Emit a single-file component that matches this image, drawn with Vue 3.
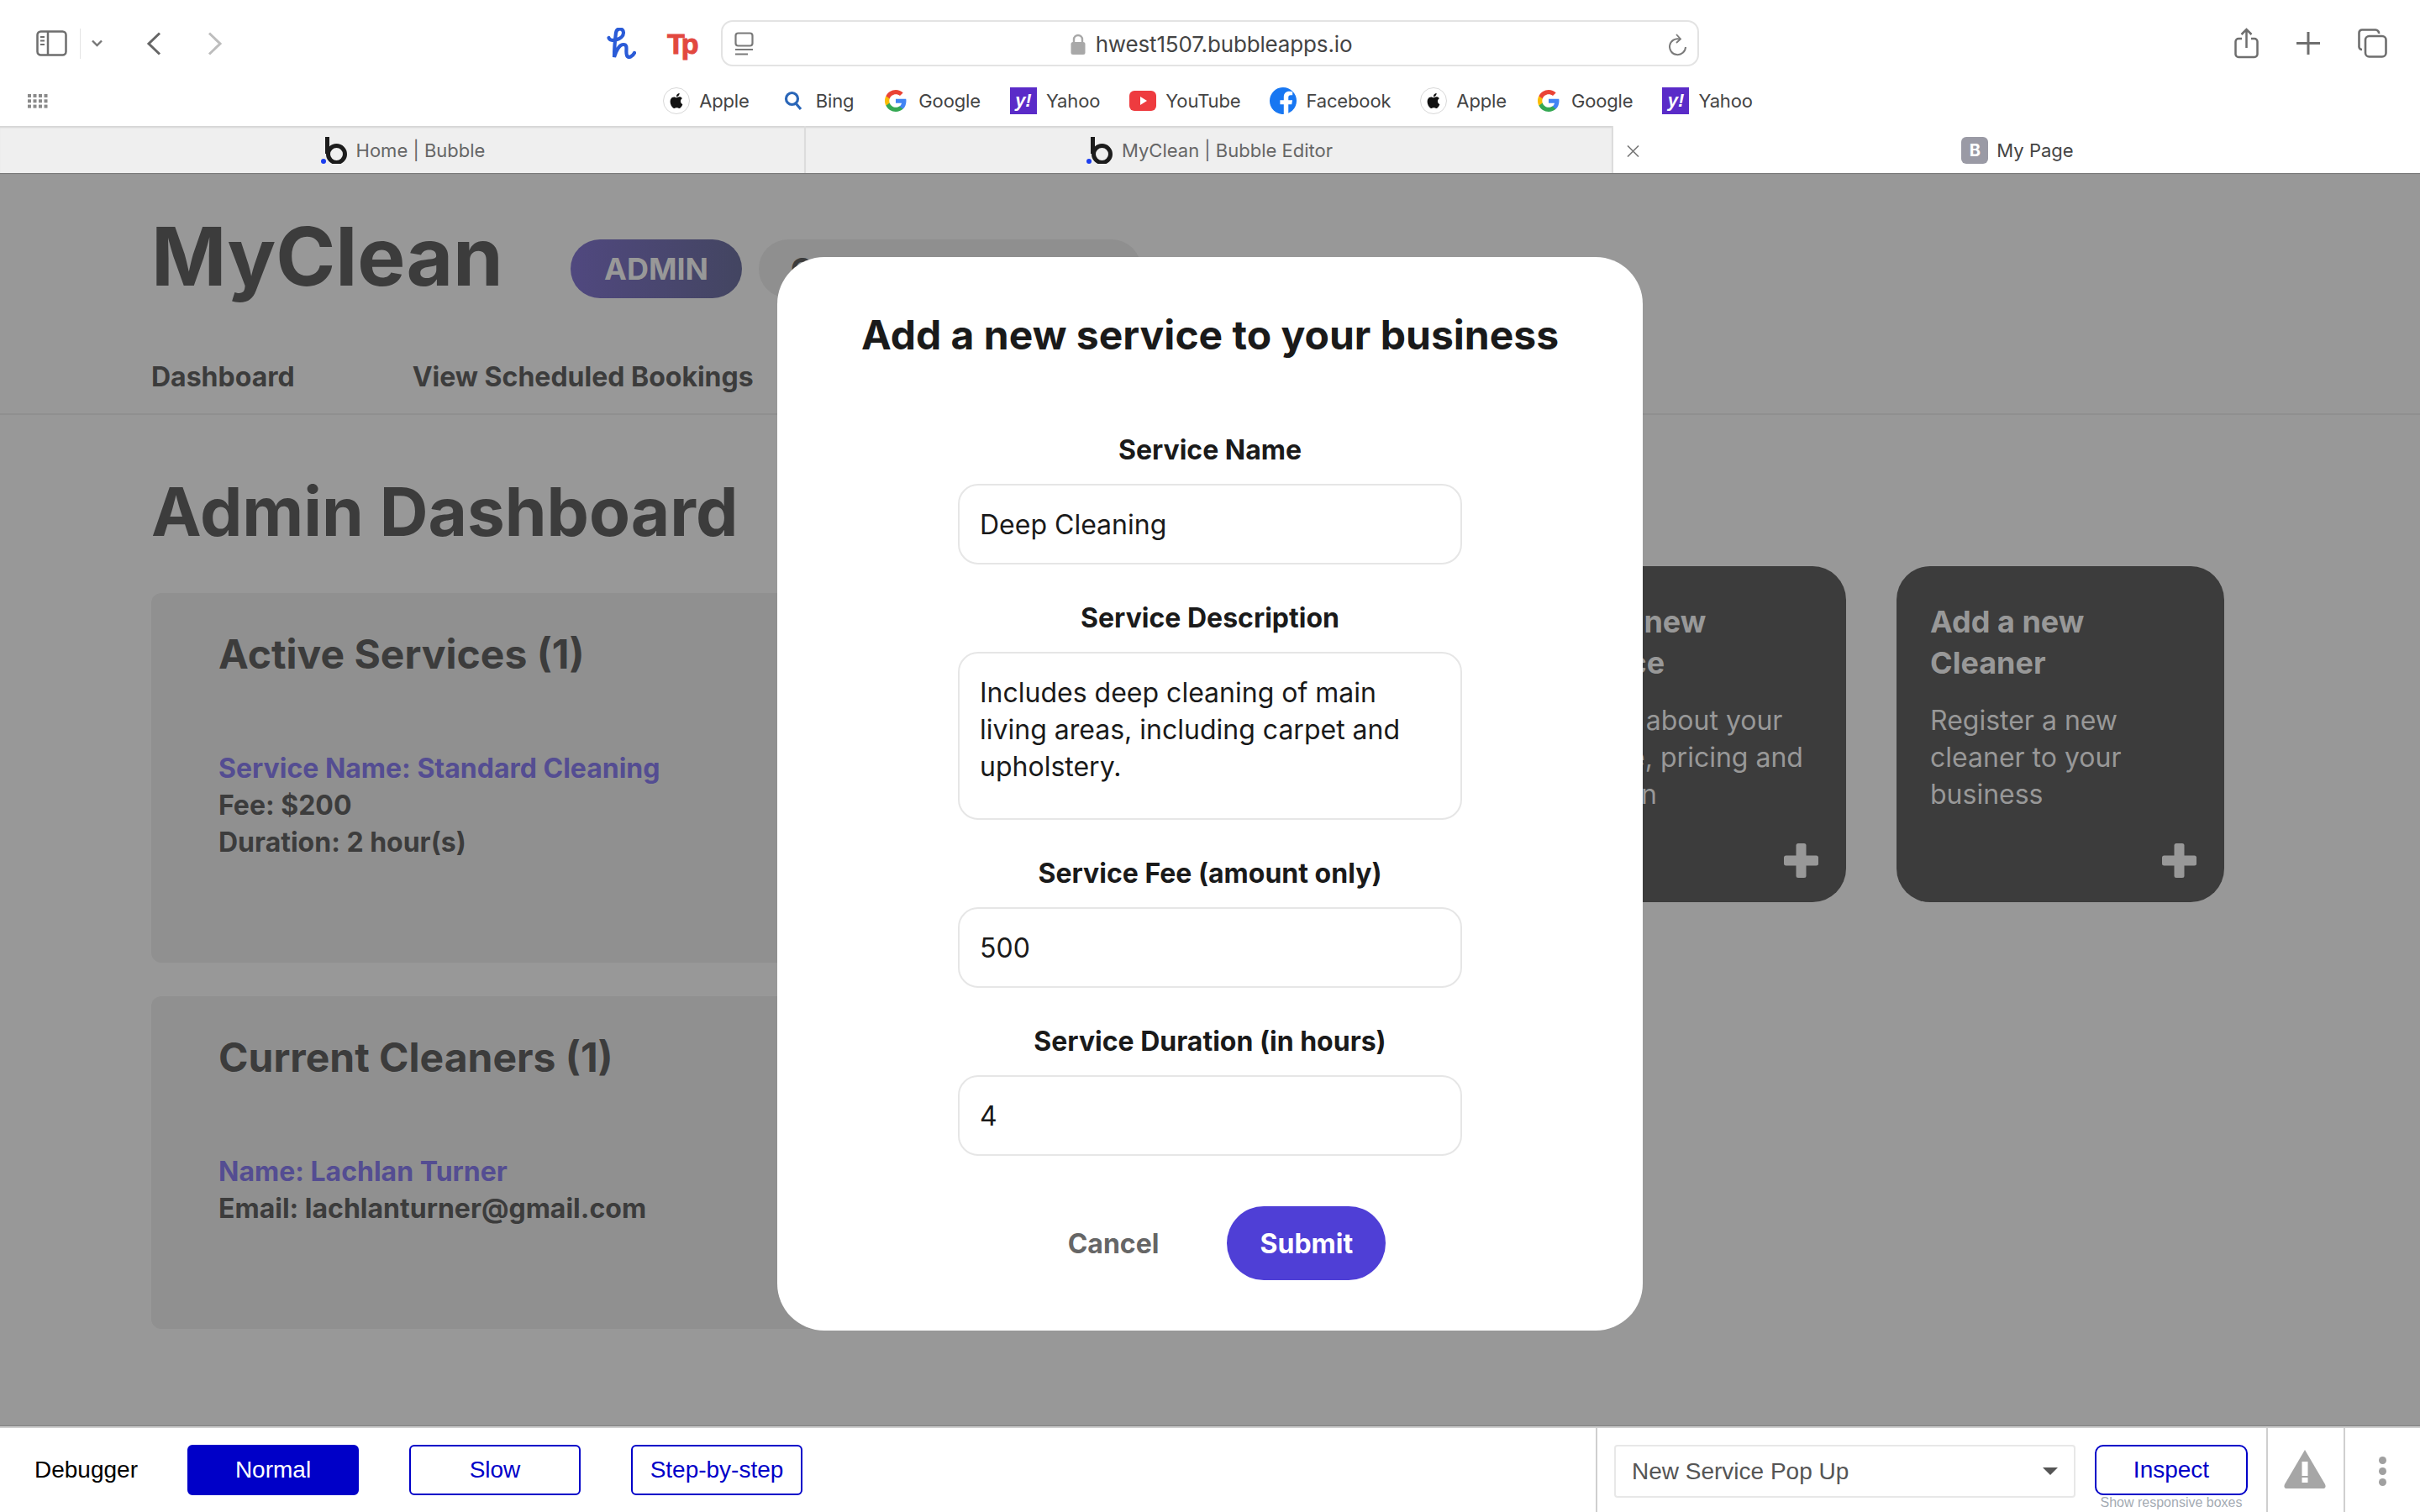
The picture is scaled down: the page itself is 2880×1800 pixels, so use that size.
<template>
  <div class="screen">
    <header class="browser">
      <div class="toolbar">
        <div class="tool-left">
          <svg class="ico-sidebar" width="37" height="31" viewBox="0 0 37 31" fill="none" stroke="#6e6e6e" stroke-width="2.5">
            <rect x="1.5" y="1.5" width="34" height="28" rx="4" />
            <path d="M14 2v27" />
            <path d="M5 8h5M5 12.5h5M5 17h5" stroke-width="2" />
          </svg>
          <span class="tool-divider"></span>
          <svg class="ico-caret" width="15" height="9" viewBox="0 0 15 9" fill="none" stroke="#777" stroke-width="2.4">
            <path d="M2 1.5l5.5 5.5L13 1.5" />
          </svg>
          <svg class="ico-back" width="18" height="28" viewBox="0 0 18 28" fill="none" stroke="#666" stroke-width="3">
            <path d="M16 1.5L3 14l13 12.5" />
          </svg>
          <svg class="ico-forward" width="18" height="28" viewBox="0 0 18 28" fill="none" stroke="#bdbdbd" stroke-width="3">
            <path d="M2 1.5L15 14 2 26.5" />
          </svg>
        </div>
        <div class="tool-center">
          <svg class="ico-h" width="35" height="38" viewBox="0 0 35 38" fill="none" stroke="#2a5bd7" stroke-width="4.2" stroke-linecap="round">
            <path d="M2.5 12C4 18 20 14 20 6C20 0 12 0 11 6C10 14 9 26 9 35C11 28 15 20 20 20C26 20 22 28 24 33C26 37 31 34 33 30" />
          </svg>
          <span class="logo-tp">Tp</span>
          <div class="url-bar">
            <svg class="ico-reader" width="23" height="28" viewBox="0 0 23 28" fill="none" stroke="#7a7a7a" stroke-width="2.2">
              <rect x="1.5" y="1.5" width="20" height="15" rx="3" />
              <path d="M1 21h21M1 26.5h15" />
            </svg>
            <div class="url">
              <svg width="18" height="25" viewBox="0 0 18 25">
                <path d="M4 11V7a5 5 0 0 1 10 0v4" fill="none" stroke="#a8a8a8" stroke-width="2.4" />
                <rect x="0.5" y="10" width="17" height="15" rx="2.5" fill="#a8a8a8" />
              </svg>
              <span>hwest1507.bubbleapps.io</span>
            </div>
            <svg class="ico-reload" width="21" height="30" viewBox="0 0 21 30" fill="none" stroke="#7a7a7a" stroke-width="2">
              <path d="M13 9.5A9.5 9.5 0 1 0 20 19" />
              <path d="M9 4l5 5.5-5 4.5" stroke-width="1.8" />
            </svg>
          </div>
        </div>
        <div class="tool-right">
          <svg width="29" height="37" viewBox="0 0 29 37" fill="none" stroke="#6e6e6e" stroke-width="2.5">
            <path d="M9 13H5a3.5 3.5 0 0 0-3.5 3.5v15A3.5 3.5 0 0 0 5 35h19a3.5 3.5 0 0 0 3.5-3.5v-15A3.5 3.5 0 0 0 24 13h-4" />
            <path d="M14.5 24V2M8.5 8l6-6 6 6" />
          </svg>
          <svg width="28" height="27" viewBox="0 0 28 27" fill="none" stroke="#6e6e6e" stroke-width="3">
            <path d="M14 0v27M0 13.5h28" />
          </svg>
          <svg width="35" height="35" viewBox="0 0 35 35" fill="none" stroke="#6e6e6e" stroke-width="2.6">
            <path d="M5 25A3.5 3.5 0 0 1 1.5 21V5A3.5 3.5 0 0 1 5 1.5h16A4 4 0 0 1 25 6" />
            <rect x="9" y="9" width="24.5" height="24.5" rx="4.5" />
          </svg>
        </div>
      </div>
      <div class="bookmarks">
        <svg class="ico-grid" width="24" height="17" viewBox="0 0 24 17" fill="#8a8a8a">
          <template v-for="row in 3" :key="row">
            <rect v-for="col in 4" :key="col" :x="(col - 1) * 6.5" :y="(row - 1) * 6.3" width="4" height="4" />
          </template>
        </svg>
        <div class="bookmark-list">
          <div v-for="(mark, i) in bookmarks" :key="i" class="bookmark">
            <span v-if="mark.kind === 'apple'" class="fav fav-apple">
              <svg width="18" height="20" viewBox="0 0 24 24" fill="#111">
                <path d="M12.152 6.896c-.948 0-2.415-1.078-3.96-1.04-2.04.027-3.91 1.183-4.961 3.014-2.117 3.675-.546 9.103 1.519 12.09 1.013 1.454 2.208 3.09 3.792 3.039 1.52-.065 2.09-.987 3.935-.987 1.831 0 2.35.987 3.96.948 1.637-.026 2.676-1.48 3.676-2.948 1.156-1.688 1.636-3.325 1.662-3.415-.039-.013-3.182-1.221-3.22-4.857-.026-3.04 2.48-4.494 2.597-4.559-1.429-2.09-3.623-2.324-4.39-2.376-2-.156-3.675 1.09-4.61 1.09zM15.53 3.83c.843-1.012 1.4-2.427 1.245-3.83-1.207.052-2.662.805-3.532 1.818-.78.896-1.454 2.338-1.273 3.714 1.338.104 2.715-.688 3.559-1.701" />
              </svg>
            </span>
            <svg v-else-if="mark.kind === 'bing'" class="fav-bing" width="22" height="24" viewBox="0 0 22 24" fill="none" stroke="#2a66b8" stroke-width="3.2">
              <circle cx="9.5" cy="9.5" r="7" />
              <path d="M14 15l6 7" />
            </svg>
            <svg v-else-if="mark.kind === 'google'" class="fav-google" width="26" height="32" viewBox="1 1 22 22">
              <path fill="#4285F4" d="M22.56 12.25c0-.78-.07-1.53-.2-2.25H12v4.26h5.92c-.26 1.37-1.04 2.53-2.21 3.31v2.77h3.57c2.08-1.92 3.28-4.74 3.28-8.09z" />
              <path fill="#34A853" d="M12 23c2.97 0 5.46-.98 7.28-2.66l-3.57-2.77c-.98.66-2.23 1.06-3.71 1.06-2.86 0-5.29-1.93-6.16-4.53H2.18v2.84C3.99 20.53 7.7 23 12 23z" />
              <path fill="#FBBC05" d="M5.84 14.09c-.22-.66-.35-1.36-.35-2.09s.13-1.43.35-2.09V7.07H2.18C1.43 8.55 1 10.22 1 12s.43 3.45 1.18 4.93l2.85-2.22.81-.62z" />
              <path fill="#EA4335" d="M12 5.38c1.62 0 3.06.56 4.21 1.64l3.15-3.15C17.45 2.09 14.97 1 12 1 7.7 1 3.99 3.47 2.18 7.07l3.66 2.84c.87-2.6 3.3-4.53 6.16-4.53z" />
            </svg>
            <span v-else-if="mark.kind === 'yahoo'" class="fav fav-yahoo">y!</span>
            <svg v-else-if="mark.kind === 'youtube'" width="32" height="24" viewBox="0 0 32 24">
              <rect width="32" height="24" rx="6" fill="#ee3b3f" />
              <path d="M13 7l8 5-8 5z" fill="#fff" />
            </svg>
            <svg v-else width="32" height="32" viewBox="0 0 24 24">
              <circle cx="12" cy="12" r="12" fill="#1877f2" />
              <path fill="#fff" d="M16.7 24v-8.9h3l.6-3.7h-3.6V9c0-1 .5-2 2.1-2h1.6V3.9s-1.5-.3-2.9-.3c-3 0-4.9 1.8-4.9 5v2.8H9.3v3.7h3.3V24z" />
            </svg>
            <span>{{ mark.label }}</span>
          </div>
        </div>
      </div>
    </header>

    <nav class="tabs">
      <div class="tab tab-inactive">
        <svg width="38" height="32" viewBox="0 0 38 32" fill="none">
          <circle cx="9" cy="29" r="3" fill="#1d3ff0" />
          <path d="M13.5 0v20" stroke="#1c1c1c" stroke-width="5" />
          <circle cx="24.5" cy="20.5" r="10" stroke="#1c1c1c" stroke-width="5" />
        </svg>
        <span>Home | Bubble</span>
      </div>
      <div class="tab tab-inactive">
        <svg width="38" height="32" viewBox="0 0 38 32" fill="none">
          <circle cx="9" cy="29" r="3" fill="#1d3ff0" />
          <path d="M13.5 0v20" stroke="#1c1c1c" stroke-width="5" />
          <circle cx="24.5" cy="20.5" r="10" stroke="#1c1c1c" stroke-width="5" />
        </svg>
        <span>MyClean | Bubble Editor</span>
      </div>
      <div class="tab tab-active">
        <svg class="tab-close" width="15" height="14" viewBox="0 0 15 14" fill="none" stroke="#777" stroke-width="1.6">
          <path d="M1 0.5l13 13M14 0.5l-13 13" />
        </svg>
        <span class="tab-b">B</span>
        <span>My Page</span>
      </div>
    </nav>

    <main class="page">
      <div class="page-head">
        <div class="brand-row">
          <h1 class="brand">MyClean</h1>
          <span class="pill pill-admin">ADMIN</span>
          <span class="pill pill-mode">Customer Area Mode</span>
        </div>
        <div class="page-nav">
          <span>Dashboard</span>
          <span>View Scheduled Bookings</span>
        </div>
      </div>

      <div class="page-body">
        <div class="col-main">
          <h2 class="page-title">Admin Dashboard</h2>
          <section class="panel panel-services">
            <h3>Active Services (1)</h3>
            <p class="accent">Service Name: Standard Cleaning</p>
            <p>Fee: $200</p>
            <p>Duration: 2 hour(s)</p>
          </section>
          <section class="panel panel-cleaners">
            <h3>Current Cleaners (1)</h3>
            <p class="accent">Name: Lachlan Turner</p>
            <p>Email: lachlanturner@gmail.com</p>
          </section>
        </div>
        <div class="col-cards">
          <article v-for="card in cards" :key="card.title" class="card">
            <h4>{{ card.title }}</h4>
            <p>{{ card.text }}</p>
            <svg class="card-plus" width="41" height="41" viewBox="0 0 41 41" fill="#989898">
              <rect x="14.5" y="0" width="12" height="41" rx="2.5" />
              <rect x="0" y="14.5" width="41" height="12" rx="2.5" />
            </svg>
          </article>
        </div>
      </div>

      <div class="modal-layer">
        <div class="modal">
          <h2 class="modal-title">Add a new service to your business</h2>
          <div v-for="field in fields" :key="field.label" class="field">
            <label>{{ field.label }}</label>
            <div class="input" :class="{ 'input-area': field.area }">{{ field.value }}</div>
          </div>
          <div class="modal-actions">
            <button class="btn-cancel">Cancel</button>
            <button class="btn-submit">Submit</button>
          </div>
        </div>
      </div>
    </main>

    <footer class="debugger">
      <div class="debug-left">
        <span class="debug-label">Debugger</span>
        <button class="debug-btn debug-btn-on">Normal</button>
        <button class="debug-btn">Slow</button>
        <button class="debug-btn">Step-by-step</button>
      </div>
      <div class="debug-right">
        <div class="debug-inspect">
          <div class="debug-select">
            <span>New Service Pop Up</span>
            <i class="select-caret"></i>
          </div>
          <div class="inspect-stack">
            <button class="debug-btn">Inspect</button>
            <small>Show responsive boxes</small>
          </div>
        </div>
        <div class="debug-warn">
          <svg width="50" height="47" viewBox="0 0 50 47">
            <path d="M25 1L49 42Q51 47 46 47H4Q-1 47 1 42Z" fill="#a6a6a6" />
            <rect x="21.5" y="15" width="7" height="17" fill="#fff" />
            <rect x="21.5" y="34" width="7" height="6" fill="#fff" />
          </svg>
        </div>
        <div class="debug-more">
          <i></i>
          <i></i>
          <i></i>
        </div>
      </div>
    </footer>
  </div>
</template>

<script setup>
const bookmarks = [
  { kind: 'apple', label: 'Apple' },
  { kind: 'bing', label: 'Bing' },
  { kind: 'google', label: 'Google' },
  { kind: 'yahoo', label: 'Yahoo' },
  { kind: 'youtube', label: 'YouTube' },
  { kind: 'facebook', label: 'Facebook' },
  { kind: 'apple', label: 'Apple' },
  { kind: 'google', label: 'Google' },
  { kind: 'yahoo', label: 'Yahoo' },
];

const cards = [
  { title: 'Add a new Service', text: 'Details about your service, pricing and duration' },
  { title: 'Add a new Cleaner', text: 'Register a new cleaner to your business' },
];

const fields = [
  { label: 'Service Name', value: 'Deep Cleaning' },
  {
    label: 'Service Description',
    value: 'Includes deep cleaning of main living areas, including carpet and upholstery.',
    area: true,
  },
  { label: 'Service Fee (amount only)', value: '500' },
  { label: 'Service Duration (in hours)', value: '4' },
];
</script>

<style>
html,
body {
  margin: 0;
  background: #fff;
}
</style>

<style scoped>
.screen {
  width: 2880px;
  height: 1800px;
  display: flex;
  flex-direction: column;
  overflow: hidden;
  font-family: Inter, "Liberation Sans", sans-serif;
}
h1,
h2,
h3,
h4,
p {
  margin: 0;
}
button {
  font: inherit;
  cursor: pointer;
}

/* browser chrome */
.browser {
  height: 150px;
  background: #fff;
  flex: none;
}
.toolbar {
  display: grid;
  grid-template-columns: 722px 1300px 1fr;
  padding-top: 24px;
  height: 55px;
  align-items: center;
}
.tool-left {
  display: flex;
  align-items: center;
  padding-left: 43px;
}
.tool-divider {
  width: 1px;
  height: 36px;
  background: #e4e4e4;
  margin-left: 15px;
}
.ico-caret {
  margin-left: 12px;
}
.ico-back {
  margin-left: 51px;
}
.ico-forward {
  margin-left: 55px;
}
.tool-center {
  display: flex;
  align-items: center;
}
.logo-tp {
  margin-left: 37px;
  width: 64px;
  font: 900 34px/1 "Liberation Sans", sans-serif;
  letter-spacing: -4px;
  color: #e2483f;
  -webkit-text-stroke: 1px #e2483f;
}
.url-bar {
  flex: 1;
  height: 55px;
  box-sizing: border-box;
  border: 2px solid #e3e3e3;
  border-radius: 14px;
  display: flex;
  align-items: center;
  padding: 0 13px 0 14px;
}
.url {
  flex: 1;
  display: flex;
  align-items: center;
  justify-content: center;
  gap: 12px;
  padding-top: 1px;
  font-size: 26px;
  letter-spacing: -0.15px;
  color: #444;
}
.tool-right {
  display: flex;
  align-items: center;
  justify-content: flex-end;
  gap: 45px;
  padding-right: 39px;
}
.bookmarks {
  display: grid;
  grid-template-columns: 1fr auto 1fr;
  align-items: center;
  height: 32px;
  margin-top: 25px;
}
.ico-grid {
  margin-left: 33px;
}
.bookmark-list {
  display: flex;
  align-items: center;
  gap: 35px;
  padding-right: 5px;
}
.bookmark {
  display: flex;
  align-items: center;
  gap: 11px;
  font-size: 22px;
  letter-spacing: -0.15px;
  color: #444;
}
.fav {
  width: 32px;
  height: 32px;
  display: flex;
  align-items: center;
  justify-content: center;
  box-sizing: border-box;
}
.fav-apple {
  background: #fff;
  border: 1px solid #d8d8d8;
  border-radius: 50%;
}
.fav-yahoo {
  background: #5a2bc8;
  color: #fff;
  font: italic 900 22px/1 "Liberation Sans", sans-serif;
}
.fav-bing {
  margin-left: 6px;
  margin-right: 5px;
}
.fav-google {
  margin-left: 2px;
  margin-right: 3px;
}

/* tab strip */
.tabs {
  height: 56px;
  flex: none;
  display: grid;
  grid-template-columns: 959px 961px 960px;
  font-size: 22px;
}
.tab {
  position: relative;
  display: flex;
  align-items: center;
  justify-content: center;
  gap: 10px;
  padding-top: 1px;
  box-sizing: border-box;
}
.tab-inactive {
  background: #efefef;
  color: #666;
  box-shadow: inset 0 3px 2px -1px #d4d4d4;
  border-right: 2px solid #dcdcdc;
  padding-right: 4px;
}
.tab-active {
  background: #fff;
  color: #444;
  padding-left: 2px;
}
.tab-close {
  position: absolute;
  left: 16px;
  top: 23px;
}
.tab-b {
  width: 32px;
  height: 32px;
  border-radius: 6px;
  background: #9a9aa5;
  color: #fff;
  font-weight: 700;
  font-size: 20px;
  line-height: 32px;
  text-align: center;
}

/* page behind the popup */
.page {
  position: relative;
  height: 1492px;
  flex: none;
  background: #989898;
  color: #3c3c3c;
  box-shadow: inset 0 2px 1px -1px #777, inset 0 -2px 1px -1px #808080;
  overflow: hidden;
}
.page-head {
  padding: 41px 0 20px 180px;
  border-bottom: 2px solid #8f8f8f;
}
.brand-row {
  display: flex;
  align-items: flex-start;
}
.brand {
  font-size: 96px;
  line-height: 116px;
  font-weight: 700;
  width: 499px;
}
.pill {
  height: 70px;
  margin-top: 38px;
  border-radius: 35px;
  font-size: 36px;
  font-weight: 700;
  line-height: 70px;
  box-sizing: border-box;
  white-space: nowrap;
}
.pill-admin {
  width: 204px;
  text-align: center;
  background: linear-gradient(90deg, #50487f, #434561);
  color: #989898;
}
.pill-mode {
  width: 455px;
  margin-left: 20px;
  padding-left: 38px;
  background: #8f8f8f;
  overflow: hidden;
}
.page-nav {
  display: flex;
  gap: 140px;
  margin-top: 63px;
  font-size: 32px;
  line-height: 46px;
  font-weight: 700;
}
.page-body {
  display: flex;
  padding: 0 180px;
}
.col-main {
  width: 1587px;
  flex: none;
}
.page-title {
  margin-top: 65px;
  font-size: 80px;
  line-height: 100px;
  font-weight: 700;
}
.panel {
  margin-top: 40px;
  padding: 45px 80px 0;
  background: #909090;
  border-radius: 12px;
  font-size: 32px;
  line-height: 44px;
  font-weight: 700;
}
.panel-services {
  margin-top: 47px;
  height: 440px;
  box-sizing: border-box;
}
.panel-cleaners {
  height: 396px;
  box-sizing: border-box;
}
.panel h3 {
  font-size: 48px;
  line-height: 56px;
  font-weight: 700;
  margin-bottom: 86px;
}
.accent {
  color: #544d92;
}
.col-cards {
  display: flex;
  gap: 60px;
  margin: 180px 0 0 40px;
}
.card {
  width: 390px;
  height: 400px;
  flex: none;
  box-sizing: border-box;
  padding: 42px 33px 29px 40px;
  border-radius: 40px;
  background: #3c3c3c;
  color: #989898;
  display: flex;
  flex-direction: column;
}
.card h4 {
  font-size: 36px;
  line-height: 49px;
  font-weight: 700;
}
.card p {
  margin-top: 22px;
  font-size: 32px;
  line-height: 44px;
}
.card-plus {
  margin-top: auto;
  align-self: flex-end;
}

/* popup */
.modal-layer {
  position: absolute;
  inset: 0;
  display: flex;
  justify-content: center;
  align-items: flex-start;
  padding-top: 100px;
}
.modal {
  width: 1030px;
  box-sizing: border-box;
  padding: 62px 0 60px;
  background: #fff;
  border-radius: 56px;
  display: flex;
  flex-direction: column;
  align-items: center;
  color: #1a1a1a;
}
.modal-title {
  font-size: 48px;
  line-height: 62px;
  font-weight: 700;
  margin-bottom: 42px;
}
.field {
  width: 600px;
  margin-top: 42px;
  display: flex;
  flex-direction: column;
  align-items: center;
}
.field label {
  height: 42px;
  font-size: 32px;
  line-height: 44px;
  font-weight: 700;
  margin-bottom: 20px;
}
.input {
  width: 100%;
  height: 96px;
  box-sizing: border-box;
  border: 2px solid #e6e6e6;
  border-radius: 24px;
  padding: 0 24px;
  font-size: 32px;
  line-height: 94px;
}
.input-area {
  height: 200px;
  padding-top: 25px;
  line-height: 44px;
}
.modal-actions {
  display: flex;
  align-items: center;
  gap: 41px;
  margin-top: 60px;
}
.btn-cancel {
  padding: 0 40px;
  border: 0;
  background: none;
  color: #666;
  font-size: 32px;
  font-weight: 700;
}
.btn-submit {
  width: 189px;
  height: 88px;
  border: 0;
  border-radius: 44px;
  background: #4f3fd6;
  color: #fff;
  font-size: 32px;
  font-weight: 700;
}

/* debugger bar */
.debugger {
  flex: 1;
  border-top: 2px solid #cfcfcf;
  background: #fff;
  display: flex;
  justify-content: space-between;
  font-family: "Liberation Sans", Arial, sans-serif;
  font-size: 28px;
}
.debug-left {
  display: flex;
  align-items: flex-start;
  padding: 20px 0 0 41px;
  gap: 60px;
}
.debug-label {
  width: 122px;
  line-height: 60px;
  color: #000;
}
.debug-btn {
  width: 204px;
  height: 60px;
  border: 2px solid #0000c8;
  border-radius: 6px;
  background: #fff;
  color: #0000c8;
  padding: 0;
  font-family: inherit;
  font-size: 28px;
}
.debug-btn-on {
  background: #0000c8;
  color: #fff;
}
.debug-right {
  display: flex;
}
.debug-inspect {
  width: 798px;
  box-sizing: border-box;
  border-left: 2px solid #cfcfcf;
  padding: 20px 22px 0 20px;
  display: flex;
  gap: 23px;
}
.debug-select {
  flex: 1;
  height: 63px;
  box-sizing: border-box;
  border: 2px solid #e8e8e8;
  border-radius: 4px;
  display: flex;
  align-items: center;
  justify-content: space-between;
  padding: 0 19px;
  color: #555;
}
.select-caret {
  width: 0;
  height: 0;
  border-left: 9px solid transparent;
  border-right: 9px solid transparent;
  border-top: 9px solid #555;
}
.inspect-stack {
  width: 182px;
  display: flex;
  flex-direction: column;
  align-items: center;
}
.inspect-stack .debug-btn {
  width: 100%;
  border-radius: 10px;
}
.inspect-stack small {
  font-size: 16px;
  line-height: 18px;
  color: #a4abb3;
  white-space: nowrap;
}
.debug-warn {
  width: 92px;
  box-sizing: border-box;
  border-left: 2px solid #cfcfcf;
  padding: 25px 0 0 19px;
}
.debug-more {
  width: 91px;
  box-sizing: border-box;
  border-left: 2px solid #cfcfcf;
  display: flex;
  flex-direction: column;
  align-items: center;
  gap: 4px;
  padding-top: 34px;
}
.debug-more i {
  width: 9px;
  height: 9px;
  border-radius: 50%;
  background: #a0a0a0;
}
</style>
